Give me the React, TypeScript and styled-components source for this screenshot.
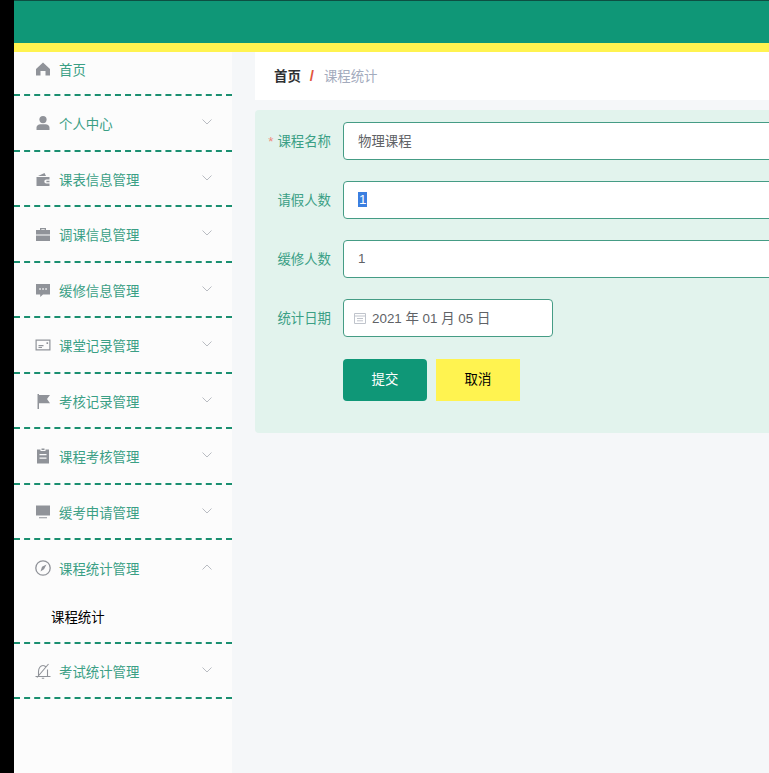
import { FC, ReactNode } from 'react';
import styled, { createGlobalStyle } from 'styled-components';

const FONT = '"Liberation Sans", "Noto Sans CJK SC", sans-serif';
const TEXT_SIZE = '13.4px';

const GlobalStyle = createGlobalStyle`
  html, body {
    margin: 0;
    height: 100%;
    overflow: hidden;
    background: #000;
    font-family: ${FONT};
  }
  * {
    box-sizing: border-box;
  }
`;

const Page = styled.div`
  height: 100vh;
  margin-left: 14px;
  display: flex;
  flex-direction: column;
  background: #f5f7f9;
  overflow: hidden;
`;

const Header = styled.header`
  flex: none;
  height: 52px;
  background: #0f9777;
  border-top: 1px solid #0d4f42;
  border-bottom: 9px solid #fff350;
`;

const Body = styled.div`
  flex: 1;
  display: flex;
  min-height: 0;
`;

const Sidebar = styled.nav`
  flex: none;
  width: 218px;
  background: #fcfcfc;
`;

const MenuRow = styled.div<{ $first?: boolean; $closed?: boolean }>`
  height: ${(p) => (p.$first ? '44px' : '55.5px')};
  padding: ${(p) => (p.$first ? '0 0 9px 21px' : '1px 0 0 21px')};
  display: flex;
  align-items: center;
  color: #3a9f85;
  font-size: ${TEXT_SIZE};
  border-bottom: ${(p) => (p.$closed ? '2px dashed #1a8f70' : 'none')};
`;

const MenuIcon = styled.svg`
  flex: none;
  width: 16px;
  height: 16px;
  margin-right: 8px;
  fill: #909399;
`;

const MenuLabel = styled.span`
  flex: 1;
`;

const Chevron = styled.svg`
  flex: none;
  width: 10px;
  height: 6px;
  margin: 0 20px 2px 0;
  fill: none;
  stroke: #b9bcc2;
  stroke-width: 1;
`;

const SubRow = styled.div`
  height: 48px;
  padding: 0 0 6px 37px;
  display: flex;
  align-items: center;
  color: #000;
  font-size: ${TEXT_SIZE};
  border-bottom: 2px dashed #1a8f70;
`;

const Main = styled.main`
  flex: none;
  width: 900px;
  padding: 0 0 0 23px;
`;

const Crumbs = styled.div`
  height: 48px;
  padding: 0 19px 2px;
  display: flex;
  align-items: center;
  background: #fff;
  font-size: ${TEXT_SIZE};
`;

const CrumbHome = styled.span`
  font-weight: 700;
  color: #303133;
`;

const CrumbSep = styled.span`
  margin: 0 10px 0 9px;
  font-weight: 700;
  font-size: 15px;
  color: #e2553d;
`;

const CrumbCurrent = styled.span`
  color: #a3abbd;
`;

const FormCard = styled.form`
  margin-top: 10px;
  padding: 12px 0 32px 13px;
  background: #e2f3ed;
  border-radius: 4px;
`;

const FormRow = styled.div<{ $last?: boolean }>`
  display: flex;
  align-items: center;
  margin-bottom: ${(p) => (p.$last ? '0' : '21px')};
`;

const FieldLabel = styled.label`
  flex: none;
  width: 63px;
  margin-right: 12px;
  padding-bottom: 3px;
  text-align: right;
  white-space: nowrap;
  font-size: ${TEXT_SIZE};
  color: #3a9f85;
`;

const Required = styled.span`
  margin-right: 4px;
  color: #f08a7d;
`;

const Field = styled.div<{ $width?: string }>`
  width: ${(p) => p.$width || '100%'};
  height: 38px;
  padding: 0 15px 2px 14px;
  display: flex;
  align-items: center;
  background: #fff;
  border: 1px solid #459c85;
  border-radius: 4px;
  font-size: ${TEXT_SIZE};
  color: #606266;
`;

const DateField = styled(Field)`
  padding-left: 10px;
`;

const CalendarIcon = styled.svg`
  flex: none;
  width: 12px;
  height: 12px;
  margin: 2px 6px 0 0;
  fill: none;
  stroke: #c0c4cc;
  stroke-width: 1;
`;

const Selected = styled.span`
  padding: 0 1px;
  background: #3b7fe0;
  color: #fff;
`;

const ButtonRow = styled.div`
  display: flex;
  gap: 9px;
  margin: 22px 0 0 75px;
`;

const ActionButton = styled.button<{ $cancel?: boolean }>`
  width: 84px;
  height: 42px;
  padding: 0 0 4px;
  border: none;
  border-radius: ${(p) => (p.$cancel ? '0' : '4px')};
  background: ${(p) => (p.$cancel ? '#fff350' : '#0f9777')};
  color: ${(p) => (p.$cancel ? '#000' : '#fff')};
  font-family: ${FONT};
  font-size: ${TEXT_SIZE};
`;

const icons: Record<string, ReactNode> = {
  home: <path d="M8 1.500 1 8v6.500h4.500V10h5v4.500H15V8z" />,
  user: (
    <>
      <circle cx="8" cy="4.600" r="3.600" />
      <path d="M1.500 15v-2.200c0-2.200 1.800-3.600 4-3.600h5c2.200 0 4 1.400 4 3.600V15z" />
    </>
  ),
  wallet: (
    <path fillRule="evenodd" d="M1.500 6h13v2.500h-3.200a2 2 0 0 0 0 4h3.200V15h-13zM3 5l6.500-3 1.500 3zM11.400 9.800h3.100v1.400h-3.100z" />
  ),
  case: (
    <path fillRule="evenodd" d="M5 4V2h6v2h4v4.500H1V4zm1.300 0h3.400V3.200H6.300zM1 9.600h14V15H1z" />
  ),
  comment: (
    <path fillRule="evenodd" d="M1 2h14v10.500H8L5.200 15v-2.500H1zm3.300 4.200v1.500h1.500V6.200zm3 0v1.500h1.500V6.200zm3 0v1.500h1.500V6.200z" />
  ),
  card: (
    <path fillRule="evenodd" d="M.5 2.500h15v11H.5zm1.200 1.200v8.600h12.600V3.700zM3.500 8h5v1.200h-5zm0 2h3.500v1.100H3.500zm8-4.700h1.600V7h-1.600z" />
  ),
  flag: <path d="M2.500 1h1.500v1h11l-3 4 3 4.200H4V16H2.500z" />,
  claim: (
    <path fillRule="evenodd" d="M5.500 1.500V3h5V1.500H14V15.500H2V1.500zM6.500.5h3V2h-3zM4.500 6v1.300h7V6zm0 3.500v1.300h7V9.500z" />
  ),
  screen: <path d="M1 1.500h14v10H1zM4 13.200h8v1H4z" />,
};

const CompassIcon = () => (
  <MenuIcon viewBox="0 0 16 16">
    <circle cx="8" cy="8" r="7.200" fill="none" stroke="#909399" strokeWidth="1.300" />
    <path d="M11.500 4.500 9 9.200 5.500 11.500 7 6.800z" />
  </MenuIcon>
);

const BellOffIcon = () => (
  <MenuIcon viewBox="0 0 16 16">
    <path
      d="M.5 13.500h15M3.500 13.500V8.600C3.500 5.200 5.500 2.500 8 2.500c1.300 0 2.400.7 3.200 1.800M12.500 6.500v7M2 14.500 13.500 1M6.800 15.300h2.400"
      fill="none"
      stroke="#909399"
      strokeWidth="1.100"
    />
  </MenuIcon>
);

interface MenuItemProps {
  icon: ReactNode;
  label: string;
  first?: boolean;
  open?: boolean;
  arrow?: boolean;
}

const MenuItem: FC<MenuItemProps> = ({ icon, label, first, open, arrow = true }) => (
  <MenuRow $first={first} $closed={!open}>
    {icon}
    <MenuLabel>{label}</MenuLabel>
    {arrow && (
      <Chevron viewBox="0 0 10 6">
        <path d={open ? 'M.5 5.500 5 1l4.500 4.500' : 'M.5.500 5 5 9.500.500'} />
      </Chevron>
    )}
  </MenuRow>
);

const glyph = (name: string) => <MenuIcon viewBox="0 0 16 16">{icons[name]}</MenuIcon>;

export default function App() {
  return (
    <>
      <GlobalStyle />
      <Page>
        <Header />
        <Body>
          <Sidebar>
            <MenuItem first arrow={false} icon={glyph('home')} label="首页" />
            <MenuItem icon={glyph('user')} label="个人中心" />
            <MenuItem icon={glyph('wallet')} label="课表信息管理" />
            <MenuItem icon={glyph('case')} label="调课信息管理" />
            <MenuItem icon={glyph('comment')} label="缓修信息管理" />
            <MenuItem icon={glyph('card')} label="课堂记录管理" />
            <MenuItem icon={glyph('flag')} label="考核记录管理" />
            <MenuItem icon={glyph('claim')} label="课程考核管理" />
            <MenuItem icon={glyph('screen')} label="缓考申请管理" />
            <MenuItem open icon={<CompassIcon />} label="课程统计管理" />
            <SubRow>课程统计</SubRow>
            <MenuItem icon={<BellOffIcon />} label="考试统计管理" />
          </Sidebar>
          <Main>
            <Crumbs>
              <CrumbHome>首页</CrumbHome>
              <CrumbSep>/</CrumbSep>
              <CrumbCurrent>课程统计</CrumbCurrent>
            </Crumbs>
            <FormCard>
              <FormRow>
                <FieldLabel>
                  <Required>*</Required>课程名称
                </FieldLabel>
                <Field>物理课程</Field>
              </FormRow>
              <FormRow>
                <FieldLabel>请假人数</FieldLabel>
                <Field>
                  <Selected>1</Selected>
                </Field>
              </FormRow>
              <FormRow>
                <FieldLabel>缓修人数</FieldLabel>
                <Field>1</Field>
              </FormRow>
              <FormRow $last>
                <FieldLabel>统计日期</FieldLabel>
                <DateField $width="210px">
                  <CalendarIcon viewBox="0 0 12 12">
                    <path d="M.5 1.500h11v10H.5zM.5 4h11M3 6.500h6M3 8.800h6" />
                  </CalendarIcon>
                  2021 年 01 月 05 日
                </DateField>
              </FormRow>
              <ButtonRow>
                <ActionButton type="button">提交</ActionButton>
                <ActionButton type="button" $cancel>
                  取消
                </ActionButton>
              </ButtonRow>
            </FormCard>
          </Main>
        </Body>
      </Page>
    </>
  );
}
